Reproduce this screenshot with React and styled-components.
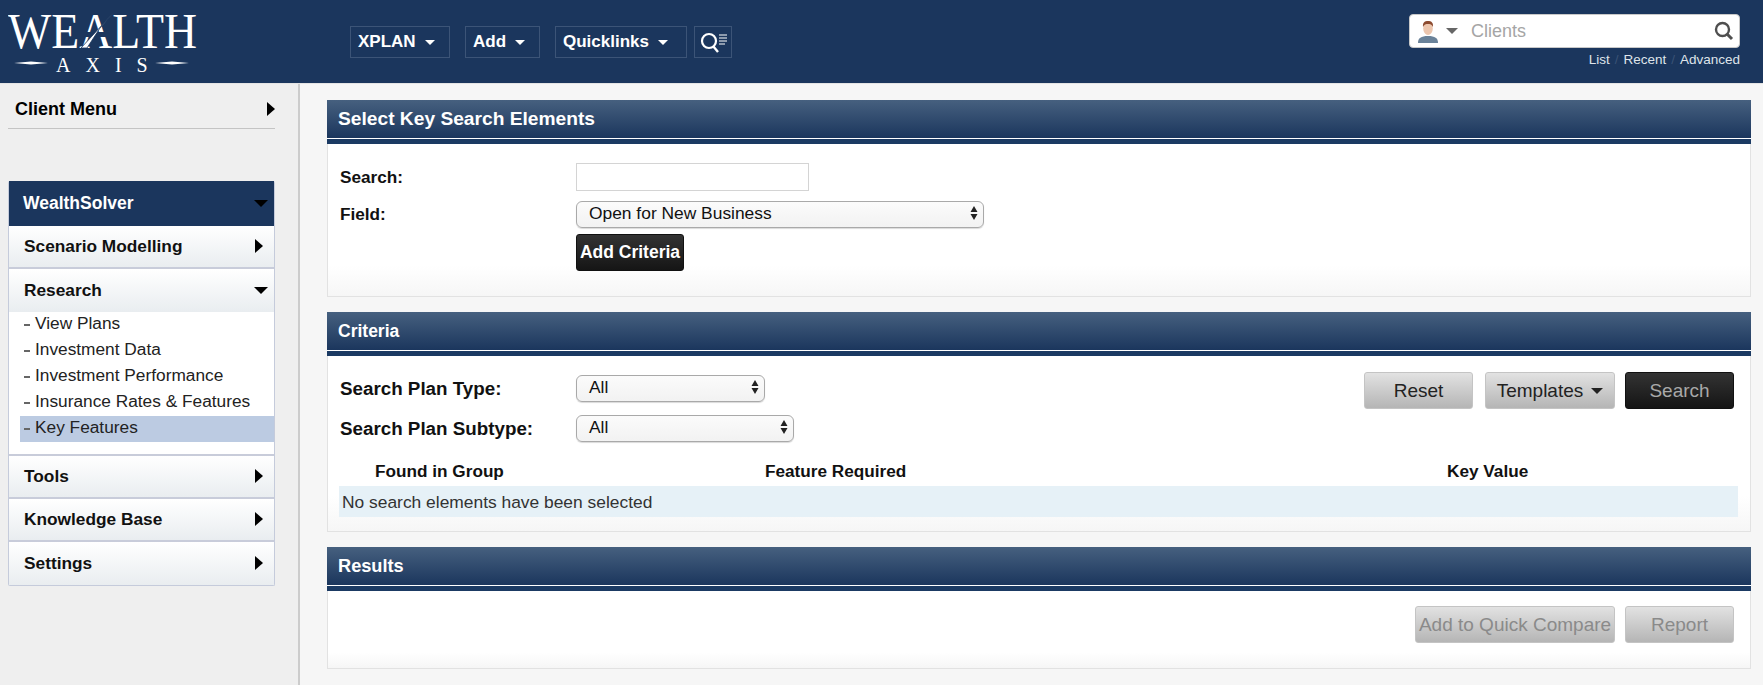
import React from 'react';
import styled, { createGlobalStyle } from 'styled-components';

const GlobalStyle = createGlobalStyle`
  html, body {
    margin: 0;
    padding: 0;
    background: #f6f6f6;
    font-family: "Liberation Sans", Arial, sans-serif;
  }
  * { box-sizing: border-box; }
`;

const Header = styled.header`
  height: 84px;
  background: #1b365d;
  display: flex;
  align-items: flex-start;
  border-bottom: 1px solid #e4e4e4;
`;

const LogoWrap = styled.div`
  width: 350px;
  flex: none;
  padding: 2px 0 0 8px;
`;

const Nav = styled.nav`
  display: flex;
  gap: 15px;
  padding-top: 26px;
`;

const NavGroup = styled.div`
  display: flex;
  gap: 7px;
`;

const NavButton = styled.button`
  height: 32px;
  width: ${(p) => p.$w}px;
  padding: 0 0 0 7px;
  display: flex;
  align-items: center;
  gap: 9px;
  background: #1b365d;
  border: 1px solid #3c5477;
  color: #fff;
  font: bold 17px "Liberation Sans", Arial, sans-serif;
  white-space: nowrap;
`;

const IconButton = styled(NavButton)`
  width: 38px;
  padding: 0 0 0 3px;
`;

const Caret = styled.span`
  width: 0;
  height: 0;
  flex: none;
  border-left: ${(p) => p.$size || 5}px solid transparent;
  border-right: ${(p) => p.$size || 5}px solid transparent;
  border-top: ${(p) => p.$size || 5}px solid ${(p) => p.$color || '#fff'};
`;

const MenuCaret = styled(Caret)`
  margin-right: -5px;
`;

const SideCaret = styled.span`
  width: 0;
  height: 0;
  flex: none;
  border-top: 7px solid transparent;
  border-bottom: 7px solid transparent;
  border-left: 8px solid #000;
`;

const ClientSearch = styled.div`
  margin-left: auto;
  margin-right: 23px;
  padding-top: 14px;
  width: 331px;
`;

const ClientBox = styled.div`
  height: 34px;
  background: #fff;
  border: 1px solid #c8c8c8;
  border-radius: 4px;
  display: flex;
  align-items: center;
  padding: 0 5px 0 7px;
  gap: 7px;
`;

const ClientPlaceholder = styled.span`
  flex: 1;
  margin-left: 6px;
  font-size: 18px;
  color: #a5a5a5;
`;

const HeaderLinks = styled.div`
  margin-top: 4px;
  display: flex;
  justify-content: flex-end;
  gap: 5px;
  font-size: 13.5px;
  color: #dfe4ea;
`;

const LinkSep = styled.span`
  color: #3a5275;
`;

const Page = styled.div`
  display: flex;
  min-height: 601px;
`;

const Sidebar = styled.aside`
  width: 300px;
  flex: none;
  background: #efefef;
  border-right: 2px solid #cccccc;
  padding: 0 23px 0 8px;
`;

const ClientMenu = styled.div`
  height: 45px;
  margin-bottom: 52px;
  padding: 6px 0 0 7px;
  display: flex;
  align-items: center;
  justify-content: space-between;
  border-bottom: 1px solid #c4c4c4;
  font-size: 18px;
  font-weight: bold;
  color: #000;
`;

const MenuPanel = styled.div`
  border: 1px solid #c5cbdb;
  border-top: 0;
  border-radius: 2px;
  background: #fff;
`;

const MenuTitle = styled.div`
  height: 44.5px;
  padding: 0 11px 0 14px;
  display: flex;
  align-items: center;
  justify-content: space-between;
  background: #1b365d;
  color: #fff;
  font-size: 17.5px;
  font-weight: bold;
`;

const MenuItem = styled.div`
  height: 43px;
  padding: 0 11px 0 15px;
  display: flex;
  align-items: center;
  justify-content: space-between;
  background: linear-gradient(#ffffff, #e9edf0);
  border-bottom: ${(p) => (p.$flat ? 0 : 2)}px solid #c8ccda;
  font-size: 17.3px;
  font-weight: bold;
  color: #111;
`;

const MenuList = styled.ul`
  list-style: none;
  margin: 0;
  padding: 0 0 12px 11px;
  border-bottom: 2px solid #c8ccda;
`;

const MenuLink = styled.li`
  height: 26px;
  display: flex;
  align-items: center;
  gap: 5px;
  padding-left: 4px;
  padding-bottom: 2px;
  font-size: 17.3px;
  color: #222;
  background: ${(p) => (p.$active ? '#bccbe2' : 'transparent')};
`;

const Dash = styled.span`
  width: 6px;
  height: 2px;
  background: #666;
  margin-top: 2px;
`;

const Main = styled.main`
  flex: 1;
  padding: 16px 12px 0 27px;
  display: flex;
  flex-direction: column;
  gap: 15px;
`;

const Card = styled.section`
  display: flex;
  flex-direction: column;
`;

const CardHeader = styled.h2`
  margin: 0;
  height: 44px;
  padding: 0 0 6px 11px;
  display: flex;
  align-items: center;
  background: linear-gradient(#46607f, #1b365d);
  background-size: 100% 38px;
  background-repeat: no-repeat;
  box-shadow: inset 0 -5px 0 #1b3a63, inset 0 -6px 0 #fff;
  color: #fff;
  font-size: ${(p) => p.$size || 17.5}px;
  font-weight: bold;
`;

const CardBody = styled.div`
  height: ${(p) => p.$h}px;
  background: linear-gradient(#fff 80%, #f6f6f6);
  border: 1px solid #e2e2e2;
  border-top: 0;
`;

const KeyForm = styled.div`
  padding: 19px 0 0 12px;
`;

const FormRow = styled.div`
  display: flex;
  align-items: center;
  height: ${(p) => p.$h}px;
  margin-bottom: ${(p) => p.$mb || 0}px;
`;

const Label = styled.label`
  width: 236px;
  flex: none;
  font-size: ${(p) => p.$size || 17.2}px;
  font-weight: bold;
  color: #111;
`;

const TextInput = styled.input`
  width: 233px;
  height: 28px;
  border: 1px solid #d4d4d4;
  background: #fff;
  padding: 0 4px;
`;

const SelectBox = styled.div`
  width: ${(p) => p.$w}px;
  height: 27px;
  padding: 0 5px 3px 12px;
  display: flex;
  align-items: center;
  justify-content: space-between;
  border: 1px solid #a9a9a9;
  border-radius: 6px;
  background: linear-gradient(#fbfbfb, #f2f2f2);
  box-shadow: 0 1px 1px rgba(0, 0, 0, 0.15);
  font-size: 17.4px;
  color: #111;
`;

const Button = styled.button`
  height: 37px;
  width: ${(p) => p.$w}px;
  padding: 0;
  display: flex;
  align-items: center;
  justify-content: center;
  gap: ${(p) => p.$gap || 0}px;
  border-radius: 3px;
  border: 1px solid ${(p) => (p.$dark ? '#111' : '#c4c4c4')};
  background: ${(p) => (p.$dark ? 'linear-gradient(#333, #151515)' : 'linear-gradient(#e2e2e2, #b5b5b5)')};
  color: ${(p) => p.$color};
  font: 19px "Liberation Sans", Arial, sans-serif;
  white-space: nowrap;
`;

const AddCriteria = styled(Button)`
  margin-left: 236px;
  font: bold 17.5px "Liberation Sans", Arial, sans-serif;
`;

const CriteriaTop = styled.div`
  display: flex;
  justify-content: space-between;
`;

const CriteriaFields = styled.div`
  padding: 19px 0 0 12px;
`;

const CriteriaButtons = styled.div`
  display: flex;
  gap: 10px;
  margin-right: 16px;
  padding-top: 16px;
  & > *:first-child {
    margin-right: 2px;
  }
`;

const TableHead = styled.div`
  display: grid;
  grid-template-columns: 390px 682px 1fr;
  padding-left: 36px;
  height: 28px;
  margin: 15px 12px 0 11px;
  align-items: center;
  font-size: 17.2px;
  font-weight: bold;
  color: #111;
`;

const EmptyRow = styled.div`
  height: 31px;
  margin: 1px 12px 0 11px;
  padding: 2px 0 0 3px;
  display: flex;
  align-items: center;
  background: #e6f1f7;
  font-size: 17.4px;
  color: #333;
`;

const ResultActions = styled.div`
  display: flex;
  justify-content: flex-end;
  gap: 10px;
  padding: 15px 16px 0 0;
`;

const Logo = () => (
  <svg width="190" height="74" viewBox="0 0 190 74">
    <text x="0" y="46" fontFamily="Liberation Serif" fontSize="50" fill="#fff" textLength="189" lengthAdjust="spacingAndGlyphs">
      WEALTH
    </text>
    <rect x="76" y="30" width="26" height="5" fill="#1b365d" />
    <path d="M107 9 L73 46 L79 46 L92 26 Z" fill="#fff" stroke="#1b365d" strokeWidth="0.8" />
    <path d="M6 61 L23 59.5 L40 61 L23 62.5 Z" fill="#fff" />
    <path d="M147 61 L164 59.5 L181 61 L164 62.5 Z" fill="#fff" />
    <text x="48" y="70" fontFamily="Liberation Serif" fontSize="20" fill="#fff" letterSpacing="15">
      AXIS
    </text>
  </svg>
);

const QuickSearchIcon = () => (
  <svg width="32" height="24" viewBox="0 0 32 24" fill="none" stroke="#fff">
    <circle cx="11" cy="11" r="7" strokeWidth="2.2" />
    <path d="M15 16l5 6" strokeWidth="2.4" />
    <path d="M21 5h8M21 8h8M21 11h8M21 14h6" strokeWidth="1" />
  </svg>
);

const AvatarIcon = () => (
  <svg width="22" height="24" viewBox="0 0 22 24">
    <path d="M1 24c0-5 3-7 10-7s10 2 10 7z" fill="#6a8299" />
    <ellipse cx="11" cy="9.5" rx="4.8" ry="6.5" fill="#ecc6ae" />
    <path d="M6 8C5.500 3 8 2 11 2s5.500 1 5 6C15 5.500 13 5 11 5S7 5.500 6 8z" fill="#8c4a2f" />
  </svg>
);

const SearchGlass = () => (
  <svg width="20" height="20" viewBox="0 0 20 20" fill="none" stroke="#4f4f4f">
    <circle cx="8.5" cy="8.5" r="6.5" strokeWidth="2.4" />
    <path d="M13 13l5 5" strokeWidth="3" />
  </svg>
);

const Stepper = () => (
  <svg width="8" height="14" viewBox="0 0 8 14" fill="#222">
    <path d="M4 0l3.500 6h-7zM4 14l3.500-6h-7z" />
  </svg>
);

const researchLinks = ['View Plans', 'Investment Data', 'Investment Performance', 'Insurance Rates & Features', 'Key Features'];

export default function App() {
  return (
    <>
      <GlobalStyle />
      <Header>
        <LogoWrap>
          <Logo />
        </LogoWrap>
        <Nav>
          <NavButton $w={100}>XPLAN <Caret /></NavButton>
          <NavButton $w={75}>Add <Caret /></NavButton>
          <NavGroup>
            <NavButton $w={132}>Quicklinks <Caret /></NavButton>
            <IconButton aria-label="Quick search">
              <QuickSearchIcon />
            </IconButton>
          </NavGroup>
        </Nav>
        <ClientSearch>
          <ClientBox>
            <AvatarIcon />
            <Caret $size={6} $color="#666" />
            <ClientPlaceholder>Clients</ClientPlaceholder>
            <SearchGlass />
          </ClientBox>
          <HeaderLinks>
            <span>List</span>
            <LinkSep>/</LinkSep>
            <span>Recent</span>
            <LinkSep>/</LinkSep>
            <span>Advanced</span>
          </HeaderLinks>
        </ClientSearch>
      </Header>
      <Page>
        <Sidebar>
          <ClientMenu>
            Client Menu
            <SideCaret />
          </ClientMenu>
          <MenuPanel>
            <MenuTitle>
              WealthSolver
              <MenuCaret $size={7} $color="#000" />
            </MenuTitle>
            <MenuItem>
              Scenario Modelling
              <SideCaret />
            </MenuItem>
            <MenuItem $flat>
              Research
              <MenuCaret $size={7} $color="#000" />
            </MenuItem>
            <MenuList>
              {researchLinks.map((link) => (
                <MenuLink key={link} $active={link === 'Key Features'}>
                  <Dash />
                  {link}
                </MenuLink>
              ))}
            </MenuList>
            <MenuItem>
              Tools
              <SideCaret />
            </MenuItem>
            <MenuItem>
              Knowledge Base
              <SideCaret />
            </MenuItem>
            <MenuItem $flat>
              Settings
              <SideCaret />
            </MenuItem>
          </MenuPanel>
        </Sidebar>
        <Main>
          <Card>
            <CardHeader $size={19.2}>Select Key Search Elements</CardHeader>
            <CardBody $h={153}>
              <KeyForm>
                <FormRow $h={28} $mb={10}>
                  <Label>Search:</Label>
                  <TextInput />
                </FormRow>
                <FormRow $h={27} $mb={6}>
                  <Label>Field:</Label>
                  <SelectBox $w={408}>
                    Open for New Business
                    <Stepper />
                  </SelectBox>
                </FormRow>
                <AddCriteria $w={108} $dark $color="#fff">
                  Add Criteria
                </AddCriteria>
              </KeyForm>
            </CardBody>
          </Card>
          <Card>
            <CardHeader>Criteria</CardHeader>
            <CardBody $h={176}>
              <CriteriaTop>
                <CriteriaFields>
                  <FormRow $h={27} $mb={13}>
                    <Label $size={18.8}>Search Plan Type:</Label>
                    <SelectBox $w={189}>
                      All
                      <Stepper />
                    </SelectBox>
                  </FormRow>
                  <FormRow $h={27}>
                    <Label $size={18.8}>Search Plan Subtype:</Label>
                    <SelectBox $w={218}>
                      All
                      <Stepper />
                    </SelectBox>
                  </FormRow>
                </CriteriaFields>
                <CriteriaButtons>
                  <Button $w={109} $color="#222">Reset</Button>
                  <Button $w={130} $gap={8} $color="#222">
                    Templates <Caret $size={6} $color="#222" />
                  </Button>
                  <Button $w={109} $dark $color="#a9a9a9">Search</Button>
                </CriteriaButtons>
              </CriteriaTop>
              <TableHead>
                <span>Found in Group</span>
                <span>Feature Required</span>
                <span>Key Value</span>
              </TableHead>
              <EmptyRow>No search elements have been selected</EmptyRow>
            </CardBody>
          </Card>
          <Card>
            <CardHeader $size={18.2}>Results</CardHeader>
            <CardBody $h={78}>
              <ResultActions>
                <Button $w={200} $color="#8a8a8a">Add to Quick Compare</Button>
                <Button $w={109} $color="#8a8a8a">Report</Button>
              </ResultActions>
            </CardBody>
          </Card>
        </Main>
      </Page>
    </>
  );
}
